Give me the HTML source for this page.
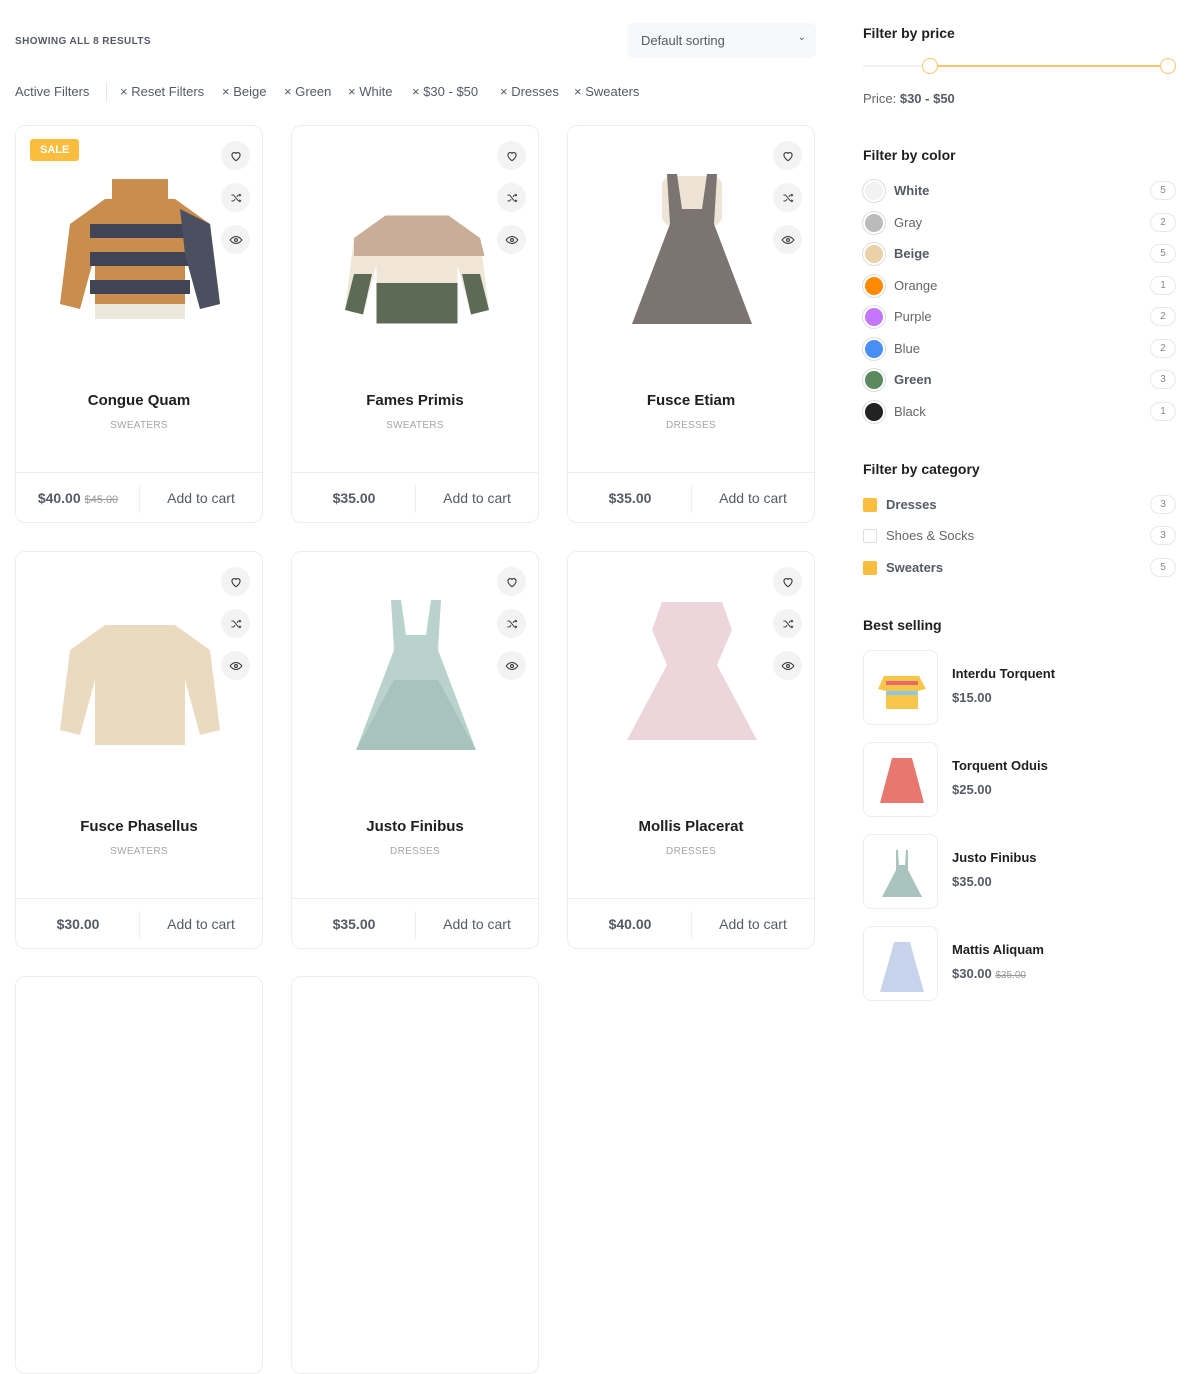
<!DOCTYPE html>
<html><head><meta charset="utf-8"><style>
*{box-sizing:border-box;margin:0;padding:0}
body{width:1190px;height:992px;overflow:hidden;background:#fff;font-family:"Liberation Sans",sans-serif;color:#333;position:relative}
.abs{position:absolute}
.card{position:absolute;width:248px;height:398px;border:1px solid #eeeeee;border-radius:10px;background:#fff;overflow:hidden}
.card .t{position:absolute;top:266px;left:0;right:0;text-align:center;font-weight:bold;font-size:15px;color:#1f1f1f}
.card .c{position:absolute;top:294px;left:0;right:0;text-align:center;font-size:10px;color:#a5a5a5;letter-spacing:.3px}
.card .f{position:absolute;top:346px;left:0;right:0;height:52px;border-top:1px solid #eee}
.card .pr{position:absolute;left:0;width:124px;top:17px;text-align:center;font-weight:bold;font-size:14px;color:#555b65}
.card .pr s{font-weight:normal;font-size:11px;color:#9a9a9a}
.card .sep{position:absolute;left:123px;top:12px;height:28px;border-left:1px solid #eee}
.card .ac{position:absolute;left:124px;right:0;top:17px;text-align:center;font-size:14px;color:#555b65}
.ic{position:absolute;left:205px;width:29px;height:29px;border-radius:50%;background:#f3f3f3;display:flex;align-items:center;justify-content:center}
.img{position:absolute;left:34px;top:38px;width:180px;height:180px}
.sale{position:absolute;left:14px;top:13px;background:#fbbd3e;color:#fff;font-weight:bold;font-size:11px;padding:5px 10px;border-radius:3px}
h4{position:absolute;left:863px;font-size:14px;font-weight:bold;color:#1f1f1f}
.crow{position:absolute;left:863px;width:313px;height:24px;font-size:13px;color:#666}
.crow .dot{position:absolute;left:0;top:1px;width:22px;height:22px;border-radius:50%;border:2px solid #fff;box-shadow:0 0 0 1px #ddd}
.crow .n{position:absolute;left:31px;top:4px}
.crow.b .n{font-weight:bold;color:#555b65}
.cnt{position:absolute;right:0;top:2px;width:26px;height:19px;border:1px solid #e8e8e8;border-radius:10px;font-size:10px;color:#888;text-align:center;line-height:17px}
.chk{position:absolute;left:0;top:5px;width:14px;height:14px;border-radius:2px;border:1px solid #ddd}
.chk.on{background:#fbbd3e;border-color:#fbbd3e}
.bs{position:absolute;left:863px;width:313px;height:75px}
.bs .th{position:absolute;left:0;top:0;width:75px;height:75px;border:1px solid #eee;border-radius:8px;overflow:hidden}
.bs .nm{position:absolute;left:89px;top:16px;font-weight:bold;font-size:13px;color:#1f1f1f}
.bs .p{position:absolute;left:89px;top:40px;font-weight:bold;font-size:13px;color:#555b65}
.bs .p s{font-weight:normal;font-size:10px;color:#999}
.filt{position:absolute;top:84px;font-size:13px;color:#555b65}
</style></head><body>

<div class="abs" style="left:15px;top:36px;font-size:10px;font-weight:bold;color:#555b65;letter-spacing:.4px">SHOWING ALL 8 RESULTS</div>
<div class="abs" style="left:627px;top:23px;width:189px;height:35px;background:#f7f8fa;border-radius:6px;font-size:13px;color:#555b65;padding:10px 14px">Default sorting<span style="position:absolute;right:10px;top:9px;font-size:10px">⌄</span></div>

<div class="filt" style="left:15px">Active Filters</div>
<div class="abs" style="left:106px;top:82px;height:20px;border-left:1px solid #e5e5e5"></div>
<div class="filt" style="left:120px">× Reset Filters</div>
<div class="filt" style="left:222px">× Beige</div>
<div class="filt" style="left:284px">× Green</div>
<div class="filt" style="left:348px">× White</div>
<div class="filt" style="left:412px">× $30 - $50</div>
<div class="filt" style="left:500px">× Dresses</div>
<div class="filt" style="left:574px">× Sweaters</div>

<svg width="0" height="0" style="position:absolute"><defs>
<symbol id="heart" viewBox="0 0 24 24"><path d="M12 20s-7-4.5-7-10a4 4 0 0 1 7-2.5A4 4 0 0 1 19 10c0 5.5-7 10-7 10z" fill="none" stroke="#333" stroke-width="1.8"/></symbol>
<symbol id="shuf" viewBox="0 0 24 24"><path d="M4 7h4l8 10h4M4 17h4l2.5-3M13.5 10L16 7h4M18 5l2 2-2 2M18 15l2 2-2 2" fill="none" stroke="#333" stroke-width="1.6"/></symbol>
<symbol id="eye" viewBox="0 0 24 24"><path d="M2 12s4-6 10-6 10 6 10 6-4 6-10 6S2 12 2 12z" fill="none" stroke="#333" stroke-width="1.8"/><circle cx="12" cy="12" r="2.5" fill="none" stroke="#333" stroke-width="1.8"/></symbol>
<symbol id="sw" viewBox="0 0 180 180"><path d="M55 35 L125 35 L160 60 L170 140 L150 145 L135 90 L135 155 L45 155 L45 90 L30 145 L10 140 L20 60 Z"/></symbol>
<symbol id="dr" viewBox="0 0 180 180"><path d="M65 10 L75 10 L80 45 L100 45 L105 10 L115 10 L112 60 L150 160 L30 160 L68 60 Z"/></symbol>
</defs></svg>

<!-- cards -->
<div class="card" style="left:15px;top:125px">
<div class="sale">SALE</div>
<svg class="img" viewBox="0 0 180 180"><use href="#sw" fill="#c98d4e"/><rect x="40" y="60" width="100" height="14" fill="#3f4554"/><rect x="40" y="88" width="100" height="14" fill="#3f4554"/><rect x="40" y="116" width="100" height="14" fill="#3f4554"/><path d="M130 45 L160 60 L170 140 L150 145 L135 90Z" fill="#4a5060"/><rect x="62" y="15" width="56" height="24" fill="#c98d4e"/><rect x="45" y="140" width="90" height="15" fill="#eee8dc"/></svg>
<div class="ic" style="top:15px"><svg width="14" height="14"><use href="#heart"/></svg></div>
<div class="ic" style="top:57px"><svg width="14" height="14"><use href="#shuf"/></svg></div>
<div class="ic" style="top:99px"><svg width="14" height="14"><use href="#eye"/></svg></div>
<div class="t">Congue Quam</div><div class="c">SWEATERS</div>
<div class="f"><div class="pr">$40.00 <s>$45.00</s></div><div class="sep"></div><div class="ac">Add to cart</div></div></div>

<div class="card" style="left:291px;top:125px">
<svg class="img" viewBox="0 0 180 180"><g transform="translate(10 20) scale(.9)"><use href="#sw" fill="#f0e6d8"/><path d="M55 35 L125 35 L160 60 L165 80 L20 80 L20 60Z" fill="#c9ad98"/><path d="M45 110 L135 110 L135 155 L45 155Z M20 100 L40 100 L30 145 L10 140Z M140 100 L160 100 L170 140 L150 145Z" fill="#5d6a55"/></g></svg>
<div class="ic" style="top:15px"><svg width="14" height="14"><use href="#heart"/></svg></div>
<div class="ic" style="top:57px"><svg width="14" height="14"><use href="#shuf"/></svg></div>
<div class="ic" style="top:99px"><svg width="14" height="14"><use href="#eye"/></svg></div>
<div class="t">Fames Primis</div><div class="c">SWEATERS</div>
<div class="f"><div class="pr">$35.00</div><div class="sep"></div><div class="ac">Add to cart</div></div></div>

<div class="card" style="left:567px;top:125px">
<svg class="img" viewBox="0 0 180 180"><rect x="60" y="12" width="60" height="50" rx="10" fill="#ede4d6"/><use href="#dr" fill="#7b7470"/></svg>
<div class="ic" style="top:15px"><svg width="14" height="14"><use href="#heart"/></svg></div>
<div class="ic" style="top:57px"><svg width="14" height="14"><use href="#shuf"/></svg></div>
<div class="ic" style="top:99px"><svg width="14" height="14"><use href="#eye"/></svg></div>
<div class="t">Fusce Etiam</div><div class="c">DRESSES</div>
<div class="f"><div class="pr">$35.00</div><div class="sep"></div><div class="ac">Add to cart</div></div></div>

<div class="card" style="left:15px;top:551px">
<svg class="img" viewBox="0 0 180 180"><use href="#sw" fill="#eadbc0"/></svg>
<div class="ic" style="top:15px"><svg width="14" height="14"><use href="#heart"/></svg></div>
<div class="ic" style="top:57px"><svg width="14" height="14"><use href="#shuf"/></svg></div>
<div class="ic" style="top:99px"><svg width="14" height="14"><use href="#eye"/></svg></div>
<div class="t">Fusce Phasellus</div><div class="c">SWEATERS</div>
<div class="f"><div class="pr">$30.00</div><div class="sep"></div><div class="ac">Add to cart</div></div></div>

<div class="card" style="left:291px;top:551px">
<svg class="img" viewBox="0 0 180 180"><use href="#dr" fill="#b9d3cc"/><path d="M68 90 L112 90 L150 160 L30 160Z" fill="#9db8b0" opacity=".6"/></svg>
<div class="ic" style="top:15px"><svg width="14" height="14"><use href="#heart"/></svg></div>
<div class="ic" style="top:57px"><svg width="14" height="14"><use href="#shuf"/></svg></div>
<div class="ic" style="top:99px"><svg width="14" height="14"><use href="#eye"/></svg></div>
<div class="t">Justo Finibus</div><div class="c">DRESSES</div>
<div class="f"><div class="pr">$35.00</div><div class="sep"></div><div class="ac">Add to cart</div></div></div>

<div class="card" style="left:567px;top:551px">
<svg class="img" viewBox="0 0 180 180"><path d="M60 12 L120 12 L130 40 L115 75 L155 150 L25 150 L65 75 L50 40Z" fill="#ecd6dc"/></svg>
<div class="ic" style="top:15px"><svg width="14" height="14"><use href="#heart"/></svg></div>
<div class="ic" style="top:57px"><svg width="14" height="14"><use href="#shuf"/></svg></div>
<div class="ic" style="top:99px"><svg width="14" height="14"><use href="#eye"/></svg></div>
<div class="t">Mollis Placerat</div><div class="c">DRESSES</div>
<div class="f"><div class="pr">$40.00</div><div class="sep"></div><div class="ac">Add to cart</div></div></div>

<div class="card" style="left:15px;top:976px"></div>
<div class="card" style="left:291px;top:976px"></div>

<!-- sidebar -->
<h4 style="top:25px">Filter by price</h4>
<div class="abs" style="left:863px;top:65px;width:67px;height:2px;background:#f2f2f2"></div>
<div class="abs" style="left:930px;top:65px;width:238px;height:2px;background:#f8c46a"></div>
<div class="abs" style="left:922px;top:58px;width:16px;height:16px;border-radius:50%;border:1.5px solid #f8c46a;background:#fff"></div>
<div class="abs" style="left:1160px;top:58px;width:16px;height:16px;border-radius:50%;border:1.5px solid #f8c46a;background:#fff"></div>
<div class="abs" style="left:863px;top:91px;font-size:13px;color:#666">Price: <b style="color:#555b65">$30 - $50</b></div>

<h4 style="top:147px">Filter by color</h4>
<div class="crow b" style="top:179px"><span class="dot" style="background:#f2f2f2"></span><span class="n">White</span><span class="cnt">5</span></div>
<div class="crow" style="top:211px"><span class="dot" style="background:#bbb"></span><span class="n">Gray</span><span class="cnt">2</span></div>
<div class="crow b" style="top:242px"><span class="dot" style="background:#ecd0a8"></span><span class="n">Beige</span><span class="cnt">5</span></div>
<div class="crow" style="top:274px"><span class="dot" style="background:#ff8a00"></span><span class="n">Orange</span><span class="cnt">1</span></div>
<div class="crow" style="top:305px"><span class="dot" style="background:#c377ff"></span><span class="n">Purple</span><span class="cnt">2</span></div>
<div class="crow" style="top:337px"><span class="dot" style="background:#4a8ff7"></span><span class="n">Blue</span><span class="cnt">2</span></div>
<div class="crow b" style="top:368px"><span class="dot" style="background:#5c8a5e"></span><span class="n">Green</span><span class="cnt">3</span></div>
<div class="crow" style="top:400px"><span class="dot" style="background:#222"></span><span class="n">Black</span><span class="cnt">1</span></div>

<h4 style="top:461px">Filter by category</h4>
<div class="crow b" style="top:493px"><span class="chk on"></span><span class="n" style="left:23px">Dresses</span><span class="cnt">3</span></div>
<div class="crow" style="top:524px"><span class="chk"></span><span class="n" style="left:23px">Shoes &amp; Socks</span><span class="cnt">3</span></div>
<div class="crow b" style="top:556px"><span class="chk on"></span><span class="n" style="left:23px">Sweaters</span><span class="cnt">5</span></div>

<h4 style="top:617px">Best selling</h4>
<div class="bs" style="top:650px"><div class="th"><svg width="75" height="75"><path d="M20 25 L55 25 L62 38 L54 40 L54 58 L22 58 L22 40 L14 38Z" fill="#f6c549"/><rect x="22" y="30" width="32" height="4" fill="#e96a6a"/><rect x="22" y="40" width="32" height="4" fill="#8cc9e0"/></svg></div><div class="nm">Interdu Torquent</div><div class="p">$15.00</div></div>
<div class="bs" style="top:742px"><div class="th"><svg width="75" height="75"><path d="M28 15 L48 15 L52 30 L60 60 L16 60 L24 30Z" fill="#e8776f"/></svg></div><div class="nm">Torquent Oduis</div><div class="p">$25.00</div></div>
<div class="bs" style="top:834px"><div class="th"><svg width="75" height="75"><path d="M32 15 L34 15 L35 30 L41 30 L42 15 L44 15 L44 35 L58 62 L18 62 L32 35Z" fill="#a9c4bc"/></svg></div><div class="nm">Justo Finibus</div><div class="p">$35.00</div></div>
<div class="bs" style="top:926px"><div class="th"><svg width="75" height="75"><path d="M30 15 L46 15 L50 30 L60 65 L16 65 L26 30Z" fill="#c7d3ea"/></svg></div><div class="nm">Mattis Aliquam</div><div class="p">$30.00 <s>$35.00</s></div></div>

</body></html>
